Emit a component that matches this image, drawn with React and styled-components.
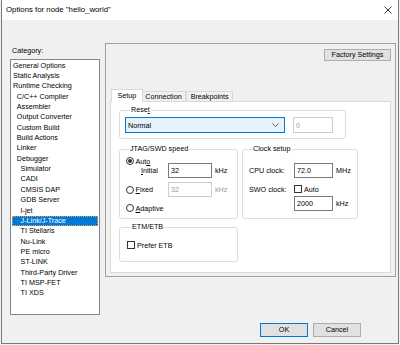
import React from "react";
import styled, { createGlobalStyle } from "styled-components";

const GlobalStyle = createGlobalStyle`
  body {
    margin: 0;
    background: #f0f0f0;
    font-family: "Liberation Sans", Arial, sans-serif;
  }
`;

const Window = styled.div`
  box-sizing: border-box;
  width: 398px;
  height: 344px;
  margin-left: 1px;
  border: 1px solid #7a7a7a;
  border-top: none;
  background: #f0f0f0;
  display: flex;
  flex-direction: column;
  font-size: 7.2px;
  color: #000;
`;

const TitleBar = styled.div`
  height: 20px;
  flex: none;
  background: #fff;
  display: flex;
  align-items: center;
  justify-content: space-between;
  padding: 0 6px 0 4px;
`;

const Caption = styled.span`
  font-size: 7.8px;
  line-height: 20px;
`;

const Body = styled.div`
  flex: 1;
  display: flex;
  flex-direction: column;
  padding: 23px 0 0 8px;
`;

const MainRow = styled.div`
  display: flex;
  align-items: flex-start;
  gap: 5px;
`;

const LeftCol = styled.div`
  width: 90px;
  display: flex;
  flex-direction: column;
`;

const FieldLabel = styled.div`
  height: 16px;
  line-height: 16px;
  padding-left: 2px;
`;

const TreeList = styled.div`
  box-sizing: border-box;
  height: 256px;
  border: 1px solid #828790;
  background: #fff;
  padding: 0.5px 1px 0;
  overflow: hidden;
`;

const TreeItem = styled.div`
  box-sizing: border-box;
  height: 10.36px;
  line-height: 10.36px;
  white-space: nowrap;
  padding-left: ${(p) => 1 + p.$level * 3.8}px;
  background: ${(p) => (p.$selected ? "#0078d7" : "transparent")};
  color: ${(p) => (p.$selected ? "#fff" : "#000")};
  outline: ${(p) => (p.$selected ? "1px dotted #d9a35c" : "none")};
  outline-offset: -1px;
`;

const Panel = styled.div`
  box-sizing: border-box;
  width: 291px;
  height: 234px;
  border: 1px solid #a0a0a0;
  padding: 5px 4px 3px 4px;
  display: flex;
  flex-direction: column;
`;

const PushButton = styled.button`
  box-sizing: border-box;
  width: ${(p) => p.$w}px;
  height: ${(p) => p.$h}px;
  padding: 0;
  background: #e1e1e1;
  border: 1px solid ${(p) => (p.$default ? "#0078d7" : "#adadad")};
  font-family: inherit;
  font-size: 7.2px;
  color: #000;
  line-height: 1;
`;

const FactoryButton = styled(PushButton)`
  align-self: flex-end;
`;

const TabStrip = styled.div`
  margin-top: 28px;
  height: 12px;
  display: flex;
  align-items: flex-end;
  padding-left: 3px;
`;

const Tab = styled.div`
  box-sizing: border-box;
  position: relative;
  height: ${(p) => (p.$active ? 13 : 10)}px;
  line-height: ${(p) => (p.$active ? 11 : 9)}px;
  margin: ${(p) => (p.$active ? "0 -2px -1px -2px" : "0")};
  padding: ${(p) => (p.$active ? "0 5.5px" : "0 3.5px")};
  border: 1px solid #d9d9d9;
  border-bottom: none;
  background: ${(p) => (p.$active ? "#fff" : "#f0f0f0")};
  z-index: ${(p) => (p.$active ? 1 : 0)};
  white-space: nowrap;
`;

const TabPage = styled.div`
  flex: 1;
  border: 1px solid #d9d9d9;
  background: #fff;
  padding: 8px 0 0 8px;
  display: flex;
  flex-direction: column;
`;

const Group = styled.div`
  box-sizing: border-box;
  width: ${(p) => p.$w}px;
  border: 1px solid #dcdcdc;
  border-radius: 3px;
  padding: 0 0 ${(p) => p.$pb}px ${(p) => p.$pl}px;
  margin-left: ${(p) => p.$ml || 0}px;
  margin-top: ${(p) => p.$mt || 0}px;
  display: flex;
  flex-direction: column;
`;

const Legend = styled.div`
  width: fit-content;
  height: 10px;
  line-height: 10px;
  margin: -6px 0 0 ${(p) => p.$ml}px;
  padding: 0 1px;
  background: #fff;
`;

const GroupRow = styled.div`
  display: flex;
  gap: 4px;
`;

const Row = styled.div`
  display: flex;
  align-items: center;
  height: ${(p) => p.$h}px;
  margin-top: ${(p) => p.$mt}px;
`;

const Cell = styled.div`
  width: ${(p) => p.$w}px;
  padding-left: ${(p) => p.$pl || 0}px;
  box-sizing: border-box;
  display: flex;
  align-items: center;
  flex: none;
`;

const Combo = styled.div`
  box-sizing: border-box;
  width: 160px;
  height: 16px;
  border: 1px solid #0078d7;
  background: #e5f1fb;
  display: flex;
  align-items: center;
  justify-content: space-between;
  padding: 0 5.5px 0 2px;
`;

const Edit = styled.input`
  box-sizing: border-box;
  width: ${(p) => p.$w}px;
  height: ${(p) => p.$h || 15}px;
  margin: 0 0 0 ${(p) => p.$ml || 0}px;
  padding: 0 2px;
  border: 1px solid ${(p) => (p.disabled ? "#cccccc" : "#7a7a7a")};
  background: #fff;
  font-family: inherit;
  font-size: 7.2px;
  color: ${(p) => (p.disabled ? "#9a9a9a" : "#000")};
  outline: none;
  flex: none;
`;

const Unit = styled.span`
  margin-left: 3px;
  color: ${(p) => (p.$disabled ? "#9a9a9a" : "#000")};
`;

const Radio = styled.span`
  box-sizing: border-box;
  width: 8px;
  height: 8px;
  border: 1px solid #333;
  border-radius: 50%;
  background: #fff;
  display: inline-flex;
  align-items: center;
  justify-content: center;
  flex: none;

  &::after {
    content: "";
    width: 4px;
    height: 4px;
    border-radius: 50%;
    background: ${(p) => (p.$checked ? "#333" : "transparent")};
  }
`;

const Check = styled.span`
  box-sizing: border-box;
  width: 8px;
  height: 8px;
  border: 1px solid #333;
  background: #fff;
  flex: none;
`;

const Option = styled.span`
  margin-left: ${(p) => p.$gap || 1.5}px;
  white-space: nowrap;
`;

const Footer = styled.div`
  margin-top: 8px;
  display: flex;
  justify-content: flex-end;
  gap: 5px;
  padding-right: 37px;
`;

const categories = [
  ["General Options", 0],
  ["Static Analysis", 0],
  ["Runtime Checking", 0],
  ["C/C++ Compiler", 1],
  ["Assembler", 1],
  ["Output Converter", 1],
  ["Custom Build", 1],
  ["Build Actions", 1],
  ["Linker", 1],
  ["Debugger", 1],
  ["Simulator", 2],
  ["CADI", 2],
  ["CMSIS DAP", 2],
  ["GDB Server", 2],
  ["I-jet", 2],
  ["J-Link/J-Trace", 2],
  ["TI Stellaris", 2],
  ["Nu-Link", 2],
  ["PE micro", 2],
  ["ST-LINK", 2],
  ["Third-Party Driver", 2],
  ["TI MSP-FET", 2],
  ["TI XDS", 2],
];

const CloseIcon = () => (
  <svg width="8" height="8" viewBox="0 0 8 8">
    <path d="M0.5 0.5L7.5 7.5M7.5 0.5L0.5 7.5" stroke="#222" strokeWidth="0.9" fill="none" />
  </svg>
);

const Chevron = () => (
  <svg width="7" height="4" viewBox="0 0 7 4">
    <polyline points="0.5,0.5 3.5,3.5 6.5,0.5" stroke="#555" strokeWidth="0.9" fill="none" />
  </svg>
);

export default function App() {
  return (
    <>
      <GlobalStyle />
      <Window>
        <TitleBar>
          <Caption>Options for node "hello_world"</Caption>
          <CloseIcon />
        </TitleBar>
        <Body>
          <MainRow>
            <LeftCol>
              <FieldLabel>Category:</FieldLabel>
              <TreeList>
                {categories.map(([name, level]) => (
                  <TreeItem key={name} $level={level} $selected={name === "J-Link/J-Trace"}>
                    {name}
                  </TreeItem>
                ))}
              </TreeList>
            </LeftCol>
            <Panel>
              <FactoryButton $w={67} $h={12}>Factory Settings</FactoryButton>
              <TabStrip>
                <Tab $active>Setup</Tab>
                <Tab>Connection</Tab>
                <Tab>Breakpoints</Tab>
              </TabStrip>
              <TabPage>
                <Group $w={227} $pl={5} $pb={5}>
                  <Legend $ml={5}>
                    Rese<u>t</u>
                  </Legend>
                  <Row $h={16} $mt={2}>
                    <Combo>
                      <span>Normal</span>
                      <Chevron />
                    </Combo>
                    <Edit $w={40} $h={16} $ml={8} disabled readOnly value="0" />
                  </Row>
                </Group>

                <GroupRow>
                  <Group $w={119} $pl={6} $pb={5} $mt={10}>
                    <Legend $ml={3}>JTAG/SWD speed</Legend>
                    <Row $h={10} $mt={2}>
                      <Radio $checked />
                      <Option>
                        Aut<u>o</u>
                      </Option>
                    </Row>
                    <Row $h={15} $mt={-3}>
                      <Cell $w={42} $pl={15}>
                        <u>I</u>nitial
                      </Cell>
                      <Edit $w={44} readOnly value="32" />
                      <Unit>kHz</Unit>
                    </Row>
                    <Row $h={15} $mt={4}>
                      <Cell $w={42}>
                        <Radio />
                        <Option>
                          <u>F</u>ixed
                        </Option>
                      </Cell>
                      <Edit $w={44} disabled readOnly value="32" />
                      <Unit $disabled>kHz</Unit>
                    </Row>
                    <Row $h={10} $mt={6}>
                      <Radio />
                      <Option>
                        <u>A</u>daptive
                      </Option>
                    </Row>
                  </Group>

                  <Group $w={116} $pl={6} $pb={7} $mt={10}>
                    <Legend $ml={3}>Clock setup</Legend>
                    <Row $h={15} $mt={9}>
                      <Cell $w={45}>CPU clock:</Cell>
                      <Edit $w={39} readOnly value="72.0" />
                      <Unit>MHz</Unit>
                    </Row>
                    <Row $h={10} $mt={6}>
                      <Cell $w={45}>SWO clock:</Cell>
                      <Check />
                      <Option $gap={2}>Auto</Option>
                    </Row>
                    <Row $h={15} $mt={2}>
                      <Cell $w={45} />
                      <Edit $w={39} readOnly value="2000" />
                      <Unit>kHz</Unit>
                    </Row>
                  </Group>
                </GroupRow>

                <Group $w={119} $pl={7} $pb={12} $mt={8}>
                  <Legend $ml={4}>ETM/ETB</Legend>
                  <Row $h={8} $mt={9}>
                    <Check />
                    <Option $gap={2}>Prefer ETB</Option>
                  </Row>
                </Group>
              </TabPage>
            </Panel>
          </MainRow>
          <Footer>
            <PushButton $w={48} $h={14} $default>OK</PushButton>
            <PushButton $w={48} $h={14}>Cancel</PushButton>
          </Footer>
        </Body>
      </Window>
    </>
  );
}
